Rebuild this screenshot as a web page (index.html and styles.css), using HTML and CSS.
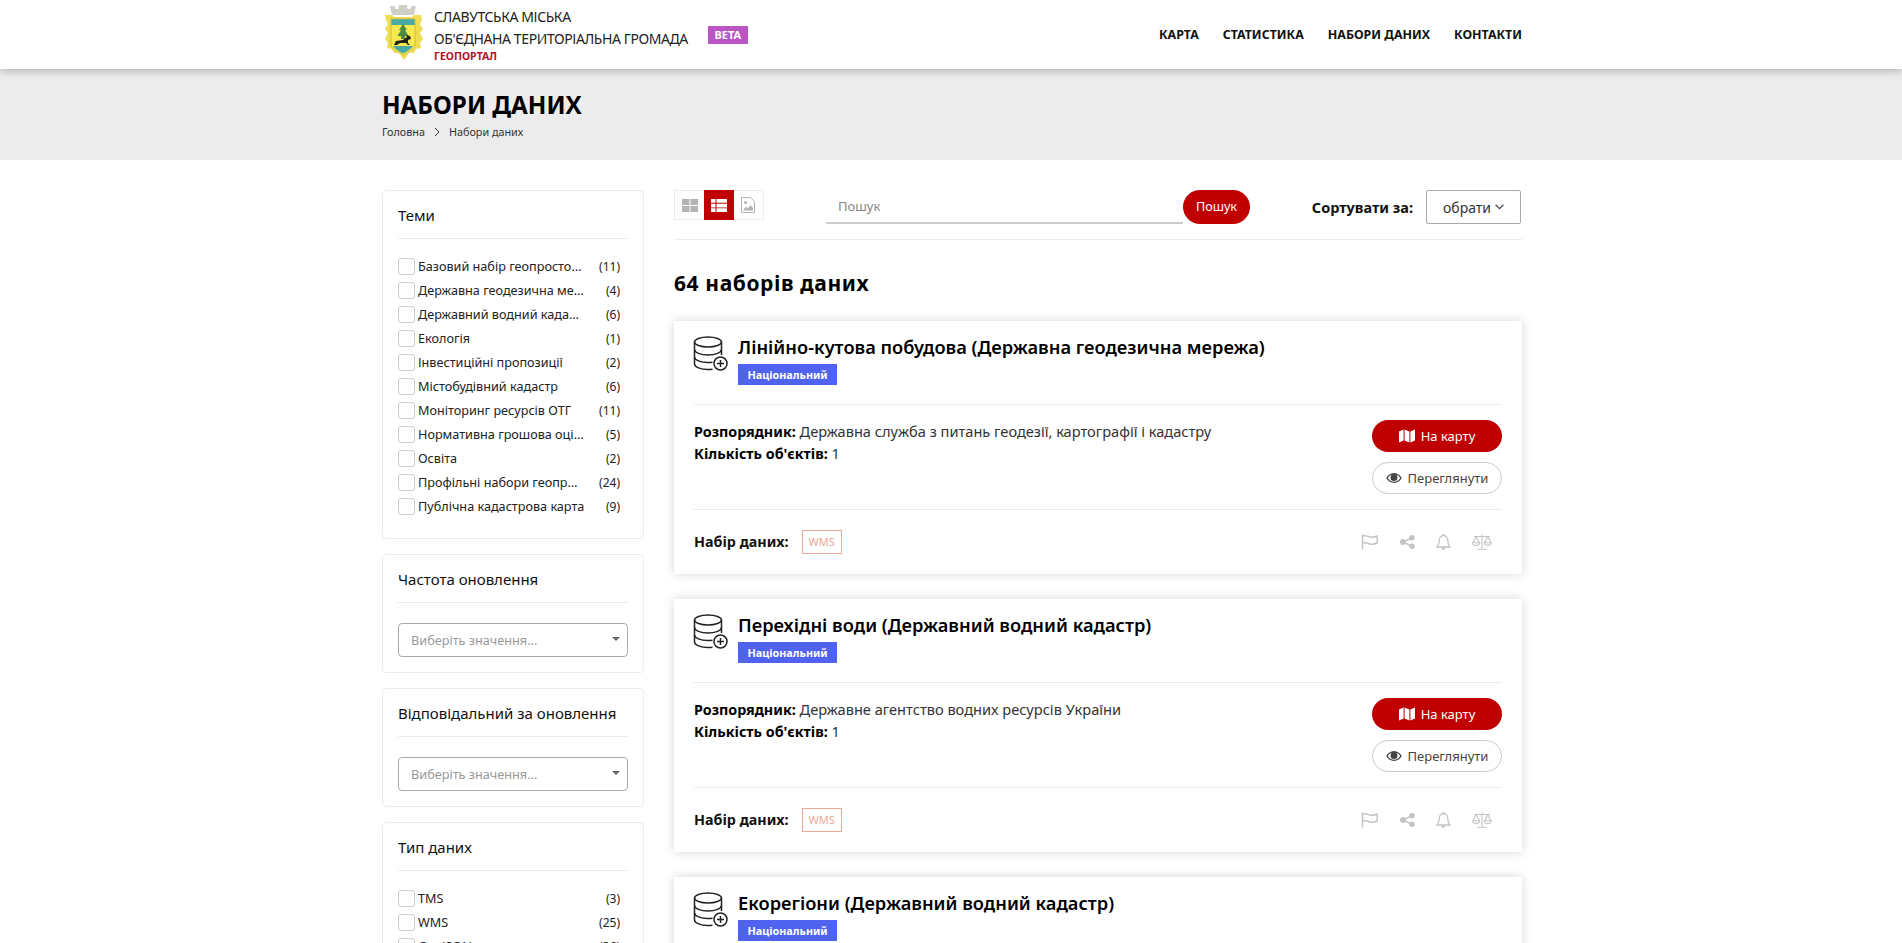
FILE: index.html
```html
<!DOCTYPE html>
<html lang="uk">
<head>
    <meta charset="UTF-8">
    <title>Набори даних</title>
    <link rel="stylesheet" href="styles.css">
</head>
<body>
    <svg class="icon-defs" width="0" height="0">
        <symbol id="i-db" viewBox="0 0 36 36">
            <g fill="none" stroke="#222" stroke-width="1.5">
                <ellipse cx="15" cy="6" rx="13.5" ry="5"/>
                <path d="M1.500 6v22c0 3 6 5.500 13.500 5.500 1.500 0 3-.1 4.500-.3M28.500 6v13"/>
                <path d="M1.500 13.500c0 3 6 5.500 13.500 5.500s13.500-2.500 13.500-5.500"/>
                <path d="M1.500 21c0 3 6 5.500 13.500 5.500 1.500 0 3-.1 4.500-.3"/>
                <circle cx="27.500" cy="27.500" r="6.500" fill="#fff"/>
                <path d="M27.500 24v7M24 27.500h7"/>
            </g>
        </symbol>
        <symbol id="i-map" viewBox="0 0 16 14">
            <path fill="#fff" d="M0 2.500 4.600 0.500V11.500L0 13.500ZM5.600 0.500 10.400 2.500V13.500L5.600 11.500ZM11.400 2.500 16 0.500V11.500L11.400 13.500Z"/>
        </symbol>
        <symbol id="i-eye" viewBox="0 0 16 12">
            <path fill="#444" d="M8 1C4.500 1 1.700 3.200 0.300 6 1.700 8.800 4.500 11 8 11s6.300-2.200 7.700-5C14.300 3.200 11.500 1 8 1Zm0 8.800C5.400 9.800 3.100 8.300 1.800 6 2.700 4.500 4 3.400 5.600 2.700 4.900 3.400 4.500 4.400 4.500 5.500a3.500 3.500 0 0 0 7 0c0-1.100-.4-2.100-1.100-2.800 1.600.7 2.900 1.800 3.800 3.300-1.300 2.300-3.600 3.800-6.200 3.800Z"/>
        </symbol>
        <symbol id="i-flag" viewBox="0 0 18 16">
            <path fill="none" stroke="#c4c4c4" stroke-width="1.500" d="M1.500 0.500V15.500M1.500 2c3-1 5 .5 7.500 1 2.500 .5 4.500 .2 7-1 .5 2.500 .5 4.500 0 7-2.500 1.200-4.500 1.500-7 1-2.500-.5-4.500-2-7.500-1"/>
        </symbol>
        <symbol id="i-share" viewBox="0 0 15 14">
            <g fill="#c4c4c4">
                <circle cx="3" cy="7" r="3"/>
                <circle cx="12" cy="2.700" r="2.700"/>
                <circle cx="12" cy="11.300" r="2.700"/>
            </g>
            <path fill="none" stroke="#c4c4c4" stroke-width="1.500" d="M12 2.700 3 7l9 4.300"/>
        </symbol>
        <symbol id="i-bell" viewBox="0 0 15 16">
            <path fill="none" stroke="#c4c4c4" stroke-width="1.300" d="M7.500 1.500c-2.600 0-4.200 2-4.200 4.500 0 3.500-1 5.500-2.300 7h13c-1.300-1.500-2.300-3.500-2.300-7 0-2.500-1.600-4.500-4.200-4.500Z"/>
            <path fill="#c4c4c4" d="M5.500 13.500h4c0 1.500-1 2.300-2 2.300s-2-.8-2-2.300ZM6.700 0h1.600v2H6.700Z"/>
        </symbol>
        <symbol id="i-scale" viewBox="0 0 20 16">
            <path fill="none" stroke="#c4c4c4" stroke-width="1.100" d="M10 0.500V14.500M5.500 15.200h9M2 2.500h16M4.200 2.500 1 8.800M4.200 2.500 7.400 8.800M15.800 2.500 12.600 8.800M15.800 2.500 19 8.800M0.700 8.800h7c0 3.400-7 3.400-7 0ZM12.300 8.800h7c0 3.400-7 3.400-7 0Z"/>
        </symbol>
    </svg>

    <header class="topbar">
        <div class="container topbar-inner">
            <div class="brand">
                <svg class="crest" viewBox="0 0 42 60" width="42" height="60">
                    <path fill="#cfcfc6" d="M10 10 8 1h4.500l1 3h3l.5-4h8l.5 4h3l1-3H34l-2 9Z"/>
                    <path fill="#f0dc50" d="M3 10h7l2 2h18l2-2h7l1 5-2 4 3 5-3 4 3 6-3 4 1 5-5 1-2 4-5-.5-2 3.500-3 4-3-4-2-3.500-5 .5-2-4-5-1 1-5-3-4 3-6-3-4 3-5-2-4Z"/>
                    <path fill="#f7e94e" stroke="#b8a33a" stroke-width=".6" d="M9 14h24v25c0 5-6 8-12 11-6-3-12-6-12-11Z"/>
                    <path fill="#4aa9a2" d="M9.300 14.300h23.400v5.700H9.300ZM11 41h20c-2 3-6 5.500-10 7.500-4-2-8-4.500-10-7.500Z"/>
                    <path fill="#4c8a42" d="M21 19l4 6h-2l3.500 6H23v3h-4v-3h-3.500L19 25h-2Z"/>
                    <path fill="#1f1f1f" d="M12 40l2-4 7-1 4-3-1-2 4 1 1 3-3 1v3l2 2h-2l-2-2h-6l-3 2Z"/>
                </svg>
                <div class="brand-text">
                    <div class="brand-line-1">СЛАВУТСЬКА МІСЬКА</div>
                    <div class="brand-line-2">ОБ'ЄДНАНА ТЕРИТОРІАЛЬНА ГРОМАДА</div>
                    <div class="brand-sub">ГЕОПОРТАЛ</div>
                </div>
                <span class="beta">BETA</span>
            </div>
            <nav class="nav">
                <a>КАРТА</a>
                <a>СТАТИСТИКА</a>
                <a>НАБОРИ ДАНИХ</a>
                <a>КОНТАКТИ</a>
            </nav>
        </div>
    </header>

    <section class="title-band">
        <div class="container">
            <h1>НАБОРИ ДАНИХ</h1>
            <div class="crumbs">
                <span>Головна</span>
                <svg class="crumb-arrow" viewBox="0 0 6 10" width="6" height="10"><path fill="none" stroke="#333" d="M1 1l4 4-4 4"/></svg>
                <span>Набори даних</span>
            </div>
        </div>
    </section>

    <div class="container layout">
        <aside class="sidebar">
            <div class="panel">
                <h3>Теми</h3>
                <ul class="checks">
                    <li><i></i><span class="name">Базовий набір геопросторових даних</span><span class="num">(11)</span></li>
                    <li><i></i><span class="name">Державна геодезична мережа</span><span class="num">(4)</span></li>
                    <li><i></i><span class="name">Державний водний кадастр</span><span class="num">(6)</span></li>
                    <li><i></i><span class="name">Екологія</span><span class="num">(1)</span></li>
                    <li><i></i><span class="name">Інвестиційні пропозиції</span><span class="num">(2)</span></li>
                    <li><i></i><span class="name">Містобудівний кадастр</span><span class="num">(6)</span></li>
                    <li><i></i><span class="name">Моніторинг ресурсів ОТГ</span><span class="num">(11)</span></li>
                    <li><i></i><span class="name">Нормативна грошова оцінка земель</span><span class="num">(5)</span></li>
                    <li><i></i><span class="name">Освіта</span><span class="num">(2)</span></li>
                    <li><i></i><span class="name">Профільні набори геопросторових даних</span><span class="num">(24)</span></li>
                    <li><i></i><span class="name">Публічна кадастрова карта</span><span class="num">(9)</span></li>
                </ul>
            </div>
            <div class="panel">
                <h3>Частота оновлення</h3>
                <div class="fake-select">Виберіть значення...<b></b></div>
            </div>
            <div class="panel">
                <h3>Відповідальний за оновлення</h3>
                <div class="fake-select">Виберіть значення...<b></b></div>
            </div>
            <div class="panel">
                <h3>Тип даних</h3>
                <ul class="checks">
                    <li><i></i><span class="name">TMS</span><span class="num">(3)</span></li>
                    <li><i></i><span class="name">WMS</span><span class="num">(25)</span></li>
                    <li><i></i><span class="name">GeoJSON</span><span class="num">(36)</span></li>
                </ul>
            </div>
        </aside>

        <main class="content">
            <div class="toolbar">
                <div class="views">
                    <a class="view">
                        <svg viewBox="0 0 16 13" width="16" height="13"><path fill="#b3b3b3" d="M0 0h7.500v6H0ZM8.500 0H16v6H8.500ZM0 7h7.500v6H0ZM8.500 7H16v6H8.500Z"/></svg>
                    </a>
                    <a class="view view-on">
                        <svg viewBox="0 0 16 13" width="16" height="13"><path fill="#fff" d="M0 0h4.500v3.700H0ZM5.500 0H16v3.700H5.500ZM0 4.700h4.500v3.700H0ZM5.500 4.700H16v3.700H5.500ZM0 9.300h4.500V13H0ZM5.500 9.300H16V13H5.500Z"/></svg>
                    </a>
                    <a class="view">
                        <svg viewBox="0 0 14 16" width="14" height="16"><path fill="none" stroke="#b3b3b3" d="M.5.500h9l4 4v11H.5Z"/><circle cx="4.500" cy="5.500" r="1.500" fill="#b3b3b3"/><path fill="#b3b3b3" d="M2 13.500l3-4 2 2 2.500-3.500 2.500 3v2.500Z"/></svg>
                    </a>
                </div>
                <div class="search">
                    <div class="search-input">Пошук</div>
                    <a class="search-btn">Пошук</a>
                </div>
                <div class="sort">
                    <span class="sort-label">Сортувати за:</span>
                    <div class="sort-select">обрати
                        <svg viewBox="0 0 8 5" width="9" height="6"><path fill="none" stroke="#444" d="M.5.500 4 4 7.500.500"/></svg>
                    </div>
                </div>
            </div>

            <h2 class="count">64 наборів даних</h2>

            <article class="card">
                <div class="card-head">
                    <svg class="db-icon" width="36" height="36"><use href="#i-db"/></svg>
                    <div>
                        <div class="card-title">Лінійно-кутова побудова (Державна геодезична мережа)</div>
                        <span class="badge">Національний</span>
                    </div>
                </div>
                <div class="card-body">
                    <div class="meta">
                        <div><b>Розпорядник:</b> Державна служба з питань геодезії, картографії і кадастру</div>
                        <div><b>Кількість об'єктів:</b> 1</div>
                    </div>
                    <div class="actions">
                        <a class="btn btn-red"><svg width="16" height="14"><use href="#i-map"/></svg>На карту</a>
                        <a class="btn btn-line"><svg width="16" height="12"><use href="#i-eye"/></svg>Переглянути</a>
                    </div>
                </div>
                <div class="card-foot">
                    <b>Набір даних:</b>
                    <span class="tag">WMS</span>
                    <div class="tools">
                        <svg width="18" height="16"><use href="#i-flag"/></svg>
                        <svg width="15" height="14"><use href="#i-share"/></svg>
                        <svg width="15" height="16"><use href="#i-bell"/></svg>
                        <svg width="20" height="16"><use href="#i-scale"/></svg>
                    </div>
                </div>
            </article>

            <article class="card">
                <div class="card-head">
                    <svg class="db-icon" width="36" height="36"><use href="#i-db"/></svg>
                    <div>
                        <div class="card-title">Перехідні води (Державний водний кадастр)</div>
                        <span class="badge">Національний</span>
                    </div>
                </div>
                <div class="card-body">
                    <div class="meta">
                        <div><b>Розпорядник:</b> Державне агентство водних ресурсів України</div>
                        <div><b>Кількість об'єктів:</b> 1</div>
                    </div>
                    <div class="actions">
                        <a class="btn btn-red"><svg width="16" height="14"><use href="#i-map"/></svg>На карту</a>
                        <a class="btn btn-line"><svg width="16" height="12"><use href="#i-eye"/></svg>Переглянути</a>
                    </div>
                </div>
                <div class="card-foot">
                    <b>Набір даних:</b>
                    <span class="tag">WMS</span>
                    <div class="tools">
                        <svg width="18" height="16"><use href="#i-flag"/></svg>
                        <svg width="15" height="14"><use href="#i-share"/></svg>
                        <svg width="15" height="16"><use href="#i-bell"/></svg>
                        <svg width="20" height="16"><use href="#i-scale"/></svg>
                    </div>
                </div>
            </article>

            <article class="card">
                <div class="card-head">
                    <svg class="db-icon" width="36" height="36"><use href="#i-db"/></svg>
                    <div>
                        <div class="card-title">Екорегіони (Державний водний кадастр)</div>
                        <span class="badge">Національний</span>
                    </div>
                </div>
            </article>
        </main>
    </div>
</body>
</html>
```

FILE: styles.css
```css
html, body {
    margin: 0;
    height: 100%;
    overflow: hidden;
}

body {
    font-family: "Noto Sans", "Open Sans", sans-serif;
    font-size: 14px;
    color: #111;
    background: #fff;
}

.icon-defs {
    position: absolute;
}

.container {
    width: 1140px;
    margin: 0 auto;
    position: relative;
    left: 1px;
}

/* Top bar */
.topbar {
    height: 69px;
    background: #fff;
    box-shadow: 0 2px 8px rgba(0, 0, 0, 0.25);
    position: relative;
    z-index: 2;
}

.topbar-inner {
    display: flex;
    justify-content: space-between;
    align-items: center;
    height: 69px;
}

.brand {
    display: flex;
    align-items: center;
}

.crest {
    margin-right: 10px;
    flex: none;
}

.brand-text {
    font-size: 14px;
    color: #222;
    line-height: 21px;
    letter-spacing: -0.4px;
}

.brand-line-1 {
    line-height: 22px;
}

.brand-sub {
    font-size: 10.5px;
    font-weight: 700;
    color: #b5121b;
    line-height: 14px;
    letter-spacing: 0;
}

.beta {
    background: #bb55c4;
    color: #fff;
    font-size: 11px;
    font-weight: 700;
    width: 40px;
    height: 18px;
    line-height: 18px;
    text-align: center;
    margin-left: 20px;
}

.nav {
    display: flex;
    gap: 24px;
}

.nav a {
    font-size: 12.4px;
    font-weight: 700;
    color: #111;
}

/* Title band */
.title-band {
    height: 91px;
    background: #ececec;
    padding-top: 19px;
    box-sizing: border-box;
}

.title-band h1 {
    margin: 0;
    font-size: 24.2px;
    line-height: 34px;
    font-weight: 700;
    color: #000;
}

.crumbs {
    display: flex;
    align-items: center;
    gap: 9px;
    font-size: 10.8px;
    color: #333;
    margin-top: 2px;
}

/* Layout */
.layout {
    display: flex;
    gap: 30px;
    padding-top: 30px;
}

.sidebar {
    width: 262px;
    flex: none;
}

.content {
    width: 848px;
    flex: none;
}

/* Sidebar panels */
.panel {
    border: 1px solid #ececec;
    border-radius: 4px;
    padding: 12px 15px 15px;
    margin-bottom: 15px;
    box-sizing: border-box;
}

.panel h3 {
    margin: 0;
    padding-bottom: 10px;
    font-size: 15px;
    line-height: 25px;
    font-weight: 400;
    color: #111;
    border-bottom: 1px solid #ececec;
}

.checks {
    list-style: none;
    margin: 15px 0 5px;
    padding: 0 8px 0 0;
}

.checks li {
    display: flex;
    align-items: center;
    height: 24px;
    font-size: 12.65px;
    color: #222;
}

.checks i {
    flex: none;
    width: 15px;
    height: 15px;
    border: 1px solid #ccc;
    border-radius: 3px;
    margin-right: 3px;
}

.checks .name {
    flex: 0 1 auto;
    max-width: 167px;
    white-space: nowrap;
    overflow: hidden;
    text-overflow: ellipsis;
}

.checks .num {
    margin-left: auto;
    font-size: 12px;
}

.fake-select {
    position: relative;
    margin-top: 20px;
    height: 34px;
    line-height: 32px;
    box-sizing: border-box;
    border: 1px solid #aaa;
    border-radius: 4px;
    padding-left: 12px;
    font-size: 12.7px;
    color: #999;
}

.fake-select b {
    position: absolute;
    right: 7px;
    top: 13px;
    border-style: solid;
    border-width: 4px 4px 0;
    border-color: #666 transparent transparent;
}

/* Toolbar */
.toolbar {
    display: flex;
    align-items: flex-start;
    height: 49px;
    border-bottom: 1px solid #ececec;
}

.views {
    display: flex;
    border: 1px solid #ececec;
    height: 30px;
    box-sizing: border-box;
    width: 90px;
}

.view {
    width: 30px;
    margin: -1px 0;
    height: 30px;
    display: flex;
    align-items: center;
    justify-content: center;
}

.view-on {
    background: #c00000;
}

.search {
    display: flex;
    margin-left: 62px;
}

.search-input {
    width: 357px;
    height: 34px;
    box-sizing: border-box;
    border-bottom: 2px solid #ccc;
    padding: 7px 0 0 12px;
    font-size: 13px;
    color: #888;
}

.search-btn {
    width: 67px;
    height: 34px;
    line-height: 34px;
    text-align: center;
    background: #c00000;
    color: #fff;
    font-size: 12.6px;
    border-radius: 17px;
}

.sort {
    display: flex;
    align-items: center;
    margin-left: auto;
    margin-right: 1px;
}

.sort-label {
    font-size: 14.5px;
    font-weight: 700;
    margin-right: 13px;
}

.sort-select {
    display: flex;
    align-items: center;
    justify-content: center;
    gap: 4px;
    width: 95px;
    height: 34px;
    box-sizing: border-box;
    border: 1px solid #aaa;
    border-radius: 2px;
    font-size: 14px;
    color: #333;
}

.count {
    margin: 26px 0 21px;
    font-size: 21px;
    letter-spacing: 0.6px;
    line-height: 34px;
    font-weight: 700;
    color: #000;
}

/* Dataset cards */
.card {
    height: 253px;
    margin-bottom: 25px;
    padding: 12px 20px 0;
    box-sizing: border-box;
    background: #fff;
    box-shadow: 0 0 10px rgba(0, 0, 0, 0.16);
}

.card-head {
    display: flex;
    height: 71px;
    border-bottom: 1px solid #ececec;
}

.db-icon {
    flex: none;
    margin: 3px 9px 0 -1px;
}

.card-title {
    font-size: 18.25px;
    line-height: 28px;
    font-weight: 600;
    color: #000;
}

.badge {
    display: inline-block;
    margin-top: 3px;
    width: 99px;
    height: 21px;
    line-height: 21px;
    text-align: center;
    background: #4f63f0;
    color: #fff;
    font-size: 10.8px;
    font-weight: 700;
}

.card-body {
    display: flex;
    justify-content: space-between;
    height: 105px;
    box-sizing: border-box;
    padding-top: 15px;
    border-bottom: 1px solid #ececec;
}

.meta {
    font-size: 14.6px;
    line-height: 22px;
    color: #333;
}

.meta div {
    height: 22px;
}

.meta b {
    font-size: 14.3px;
    color: #000;
}

.actions {
    display: flex;
    flex-direction: column;
    gap: 10px;
    width: 130px;
}

.btn {
    display: flex;
    align-items: center;
    justify-content: center;
    gap: 6px;
    height: 32px;
    box-sizing: border-box;
    border-radius: 16px;
    font-size: 13px;
}

.btn-red {
    background: #c00000;
    color: #fff;
}

.btn-line {
    border: 1px solid #ccc;
    color: #444;
}

.card-foot {
    display: flex;
    align-items: center;
    height: 63px;
    font-size: 14.3px;
}

.tag {
    margin-left: 13px;
    width: 40px;
    height: 24px;
    line-height: 22px;
    box-sizing: border-box;
    border: 1px solid #eda898;
    color: #eda898;
    font-size: 11px;
    text-align: center;
}

.tools {
    display: flex;
    align-items: center;
    gap: 21px;
    margin-left: auto;
    margin-right: 10px;
}
```
